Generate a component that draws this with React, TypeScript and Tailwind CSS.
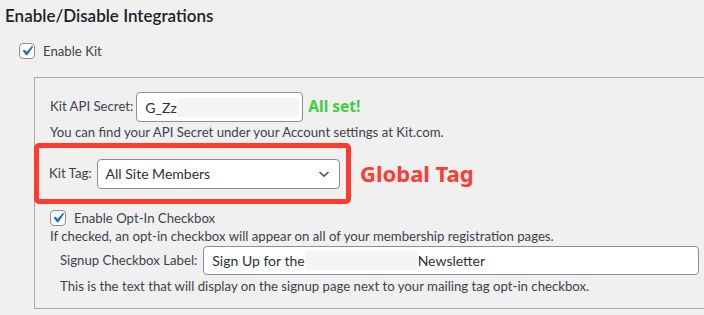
import React from "react";

function Check() {
  return (
    <span className="inline-flex h-[16px] w-[16px] shrink-0 items-center justify-center rounded-[4px] border border-[#8c8f94] bg-white">
      <svg width="20" height="20" viewBox="0 0 20 20" className="shrink-0">
        <path d="M14.83 4.89l1.34.94-5.81 8.38H9.02L5.78 9.67l1.34-1.25 2.57 2.4z" fill="#2271b1" />
      </svg>
    </span>
  );
}

function Blur({ w }: { w: number }) {
  return (
    <span
      className="inline-block h-[19px] rounded-[2px] bg-[#f4f5f6] align-middle blur-[0.5px]"
      style={{ width: w }}
    />
  );
}

const noto = { fontFamily: '"Noto Sans", "Open Sans", sans-serif' };

export default function App() {
  return (
    <div
      className="relative h-[315px] w-[704px] overflow-hidden bg-[#f0f0f1] text-[13.2px] text-[#3c434a]"
      style={{ fontFamily: 'Lato, "Noto Sans", sans-serif' }}
    >
      <h2 className="pl-[5px] pt-[4px] text-[17px] font-semibold leading-[24px] text-[#1d2327]">
        Enable/Disable Integrations
      </h2>
      <div className="mt-[15px] flex items-center gap-[8px] pl-[19px]">
        <Check />
        <span className="leading-[16px]">Enable Kit</span>
      </div>
      <div className="ml-[34px] mt-[18px] h-[232px] w-[700px] border border-[#a7aaad]">
        <div className="flex items-center pl-[15px] pt-[14px]">
          <span>Kit API Secret:</span>
          <div className="ml-[3px] flex h-[30px] w-[167px] items-center rounded-[4px] border border-[#8c8f94] bg-white pl-[8px]">
            <span className="text-[14px] text-[#2c3338]">G_Zz</span>
            <Blur w={122} />
          </div>
          <span className="ml-[5px] text-[15.5px] font-bold text-[#3ecf3e]" style={noto}>
            All set!
          </span>
        </div>
        <div className="pl-[15px] pt-[1px] leading-[18px]">
          You can find your API Secret under your Account settings at Kit.com.
        </div>
        <div className="mt-[2px] flex items-center">
          <div className="-ml-px flex h-[61px] w-[317px] items-center rounded-[5px] border-[5px] border-[#ff3b30] pl-[10px]">
            <span>Kit Tag:</span>
            <div className="ml-[5px] flex h-[30px] w-[243px] items-center justify-between rounded-[4px] border border-[#8c8f94] bg-white pl-[8px] pr-[8px]">
              <span className="text-[14px] text-[#2c3338]">All Site Members</span>
              <svg width="14" height="14" viewBox="0 0 14 14">
                <path d="M2.5 5 L7 9.2 L11.5 5" fill="none" stroke="#50575e" strokeWidth="1.6" />
              </svg>
            </div>
          </div>
          <span className="ml-[9px] text-[22px] font-bold text-[#ff3b30]" style={noto}>
            Global Tag
          </span>
        </div>
        <div className="mt-[5px] flex items-center gap-[8px] pl-[15px]">
          <Check />
          <span className="leading-[18px]">Enable Opt-In Checkbox</span>
        </div>
        <div className="pl-[15px] leading-[18px]">
          If checked, an opt-in checkbox will appear on all of your membership registration pages.
        </div>
        <div className="flex items-center pl-[25px] pt-[1px]">
          <span>Signup Checkbox Label:</span>
          <div className="ml-[6px] flex h-[29px] w-[496px] items-center rounded-[4px] border border-[#8c8f94] bg-white pl-[8px]">
            <span className="text-[14px] text-[#2c3338]">Sign Up for the</span>
            <Blur w={113} />
            <span className="text-[14px] text-[#2c3338]">Newsletter</span>
          </div>
        </div>
        <div className="pl-[25px] pt-[1px] leading-[20px]">
          This is the text that will display on the signup page next to your mailing tag opt-in checkbox.
        </div>
      </div>
    </div>
  );
}
